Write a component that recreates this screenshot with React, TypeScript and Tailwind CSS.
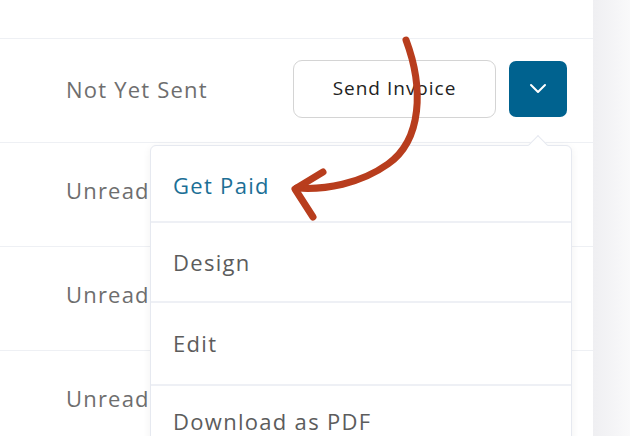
import React from "react";

export default function App() {
  const font = { fontFamily: "'Open Sans', Lato, sans-serif" };
  return (
    <div className="relative w-[630px] h-[436px] overflow-hidden bg-white flex" style={font}>
      <div className="w-[593px] h-full bg-white flex flex-col">
        <div className="h-[38px] shrink-0" />
        <div className="h-[104px] shrink-0 border-t border-[#eef0f4] flex items-center pl-[66px] pr-[26px]">
          <span className="text-[22px] tracking-[1.2px] text-[#6e6e6e] -mt-[3px]">Not Yet Sent</span>
          <div className="ml-auto flex items-center gap-[13px] -mt-[4px]">
            <button className="w-[203px] h-[58px] rounded-[9px] border border-[#d4d4d4] bg-white text-[19px] tracking-[1px] text-[#222]">
              Send Invoice
            </button>
            <button className="w-[58px] h-[56px] rounded-[7px] bg-[#00628f] flex items-center justify-center">
              <svg width="18" height="12" viewBox="0 0 18 12" fill="none">
                <path d="M2 2 L9 9 L16 2" stroke="white" strokeWidth="2" strokeLinecap="round" strokeLinejoin="round" />
              </svg>
            </button>
          </div>
        </div>
        {[0, 1, 2].map((i) => (
          <div key={i} className="h-[104px] shrink-0 border-t border-[#eef0f4] flex items-center pl-[66px] pb-[8px]">
            <span className="text-[22px] tracking-[1.2px] text-[#6e6e6e]">Unread</span>
          </div>
        ))}
      </div>
      <div className="flex-1 h-full bg-gradient-to-r from-[#efeff2] to-[#f9f9fa]" />

      {/* Dropdown */}
      <div className="absolute left-[150px] top-[145px] w-[422px] h-[320px] bg-white border border-[#e6e9f0] rounded-[6px] shadow-[0_2px_8px_rgba(0,0,0,0.06)] tracking-[1.3px]">
        <div className="absolute -top-[8px] right-[26px] w-[14px] h-[14px] bg-white border-l border-t border-[#e6e9f0] rotate-45" />
        <div className="relative flex flex-col">
          <div className="h-[77px] border-b-2 border-[#eef0f5] flex items-center pl-[22px] pt-[4px] text-[22px] text-[#1c6f96]">Get Paid</div>
          <div className="h-[80px] border-b-2 border-[#eef0f5] flex items-center pl-[22px] text-[22px] text-[#5c5c5c]">Design</div>
          <div className="h-[83px] border-b-2 border-[#eef0f5] flex items-center pl-[22px] text-[22px] text-[#5c5c5c]">Edit</div>
          <div className="h-[64px] flex items-center pl-[22px] pt-[6px] text-[22px] text-[#5c5c5c]">Download as PDF</div>
        </div>
      </div>

      {/* Arrow */}
      <svg className="absolute left-0 top-0 pointer-events-none" width="630" height="436" viewBox="0 0 630 436" fill="none">
        <path d="M406 40 C 424 88, 422 140, 388 164 C 360 184, 325 190, 297 188" stroke="#b83d1d" strokeWidth="7" strokeLinecap="round" fill="none" />
        <path d="M323 172 L 295 189 L 313 217" stroke="#b83d1d" strokeWidth="7" strokeLinecap="round" strokeLinejoin="round" fill="none" />
      </svg>
    </div>
  );
}
